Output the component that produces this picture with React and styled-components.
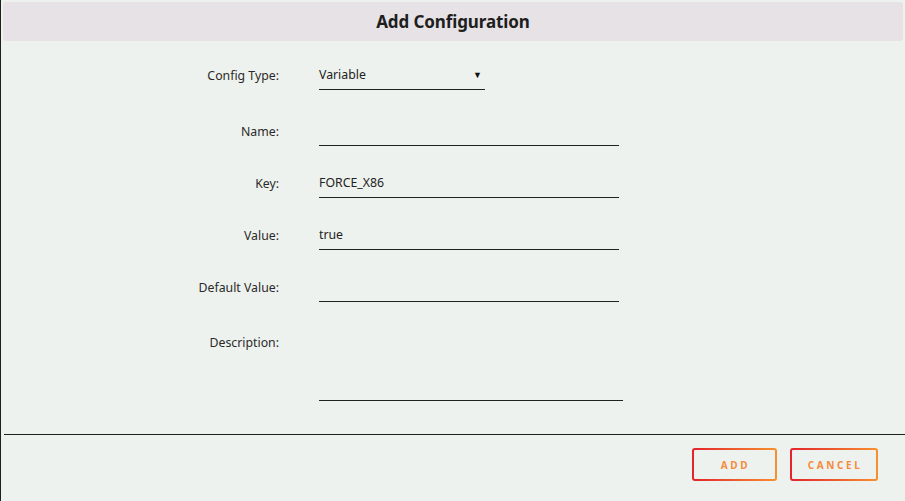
import React from "react";
import styled, { createGlobalStyle } from "styled-components";

const GlobalStyle = createGlobalStyle`
  html, body {
    margin: 0;
    padding: 0;
    background: #eef2ee;
  }
  body {
    font-family: "Noto Sans", "Open Sans", sans-serif;
    color: #222;
  }
`;

const Dialog = styled.div`
  height: 501px;
  box-sizing: border-box;
  border-left: 1px solid #1c211c;
  background: #eef2ee;
  display: flex;
  flex-direction: column;
`;

const Header = styled.div`
  margin: 2px 2px 0 2px;
  height: 39px;
  border-radius: 3px;
  background: #e6e2e5;
  display: flex;
  align-items: center;
  justify-content: center;
`;

const Title = styled.h2`
  margin: 0;
  font-size: 17px;
  font-weight: 700;
  color: #1e1e1e;
  letter-spacing: -0.1px;
`;

const Form = styled.div`
  display: flex;
  flex-direction: column;
  gap: 22px;
  padding-top: 19px;
  height: 393px;
  box-sizing: border-box;
`;

const Row = styled.div`
  display: grid;
  grid-template-columns: 278px ${(p) => p.$width || 300}px;
  column-gap: 40px;
  align-items: ${(p) => (p.$top ? "start" : "center")};
  margin-bottom: ${(p) => p.$extra || 0}px;
`;

const Label = styled.label`
  text-align: right;
  font-size: 12.3px;
  color: #2a2a2a;
  padding-top: ${(p) => (p.$top ? 9 : 0)}px;
`;

const Field = styled.div`
  height: 30px;
  box-sizing: border-box;
  border-bottom: 1px solid #1f221f;
  display: flex;
  align-items: center;
  justify-content: space-between;
  font-size: 12.3px;
  color: #222;
`;

const Arrow = styled.span`
  font-size: 9px;
  margin-right: 3px;
  color: #111;
`;

const TextArea = styled(Field)`
  height: 76px;
`;

const Divider = styled.div`
  margin-left: 3px;
  height: 1px;
  background: #1d201d;
`;

const Footer = styled.div`
  display: flex;
  justify-content: flex-end;
  gap: 13px;
  padding: 13px 27px 0 0;
`;

const Button = styled.button`
  width: ${(p) => p.$w}px;
  height: 33px;
  border: 2px solid transparent;
  border-radius: 3px;
  background:
    linear-gradient(#eef2ee, #eef2ee) padding-box,
    linear-gradient(90deg, #e3232c, #f8902f) border-box;
  color: #f58b3b;
  font-family: "Noto Sans", sans-serif;
  font-size: 10px;
  font-weight: 700;
  letter-spacing: 2.6px;
  padding: 0 0 0 2px;
  cursor: pointer;
`;

const fields = [
  { label: "Name:", value: "" },
  { label: "Key:", value: "FORCE_X86" },
  { label: "Value:", value: "true" },
  { label: "Default Value:", value: "", extra: 1 },
];

export default function App() {
  return (
    <Dialog>
      <GlobalStyle />
      <Header>
        <Title>Add Configuration</Title>
      </Header>
      <Form>
        <Row $width={166} $extra={4}>
          <Label>Config Type:</Label>
          <Field>
            <span>Variable</span>
            <Arrow>▼</Arrow>
          </Field>
        </Row>
        {fields.map((f) => (
          <Row key={f.label} $extra={f.extra}>
            <Label>{f.label}</Label>
            <Field>{f.value}</Field>
          </Row>
        ))}
        <Row $top $width={304}>
          <Label $top>Description:</Label>
          <TextArea />
        </Row>
      </Form>
      <Divider />
      <Footer>
        <Button $w={85}>ADD</Button>
        <Button $w={88}>CANCEL</Button>
      </Footer>
    </Dialog>
  );
}
